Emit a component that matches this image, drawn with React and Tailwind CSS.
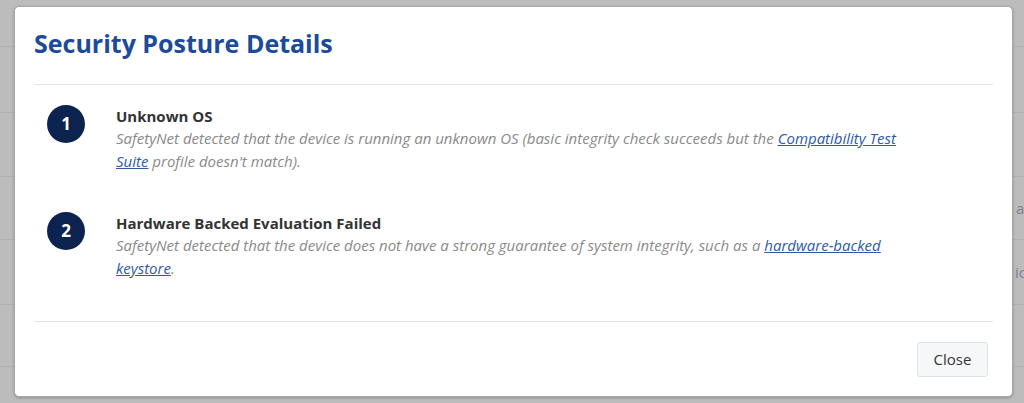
import React from 'react';

const FONT = { fontFamily: '"Open Sans", "Noto Sans", sans-serif' };

const FINDINGS = [
  {
    title: 'Unknown OS',
    before: 'SafetyNet detected that the device is running an unknown OS (basic integrity check succeeds but the ',
    link: 'Compatibility Test Suite',
    after: " profile doesn't match).",
  },
  {
    title: 'Hardware Backed Evaluation Failed',
    before: 'SafetyNet detected that the device does not have a strong guarantee of system integrity, such as a ',
    link: 'hardware-backed keystore',
    after: '.',
  },
];

// rows of the page behind the dialog, only their edges show
const ROWS = [
  { h: 'h-[47px]', right: '', mr: '' },
  { h: 'h-[66px]', right: '', mr: '' },
  { h: 'h-[64px]', right: '', mr: '' },
  { h: 'h-[63px]', right: 'al', mr: '-mr-[4px]' },
  { h: 'h-[65px]', right: 'ion', mr: '-mr-[13px]' },
  { h: 'h-[62px]', right: '', mr: '' },
];

function Backdrop() {
  return (
    <div className="absolute inset-0 bg-[#bcbcbc]">
      {ROWS.map((r, i) => (
        <div key={i} className={`${r.h} border-b border-[#b0b0b0] flex items-center justify-end`}>
          <span className={`text-[15px] text-[#7a8290] whitespace-nowrap ${r.mr}`}>{r.right}</span>
        </div>
      ))}
      <div className="pl-[272px] text-[15px] text-[#7a8290] leading-none pt-[3px]">Pixel 6a</div>
    </div>
  );
}

function Finding({ n, item }) {
  return (
    <div className="flex items-start">
      <div className="w-[82px] pl-[13px] shrink-0">
        <div className="w-[38px] h-[38px] rounded-full bg-[#0c2350] text-white flex items-center justify-center text-[17px] font-bold">
          {n}
        </div>
      </div>
      <div className="w-[810px]">
        <div className="text-[15px] font-bold text-[#333] leading-[22px]">{item.title}</div>
        <p className="text-[15px] italic text-[#8a8a8a] leading-[23px]">
          {item.before}
          <a href="#" className="text-[#2d5aa8] underline">{item.link}</a>
          {item.after}
        </p>
      </div>
    </div>
  );
}

export default function App() {
  return (
    <div className="relative w-[1024px] h-[403px] overflow-hidden" style={FONT}>
      <Backdrop />
      <div className="absolute left-[14px] top-[6px] w-[999px] h-[391px] bg-white rounded-[5px] border border-[#a8a8a8] shadow-[0_1px_3px_rgba(0,0,0,0.25)] px-[19px]">
        <div className="pt-[19px] pb-[24px] border-b border-[#e6e6e6]">
          <h2 className="text-[25px] font-bold text-[#1d4b9a] leading-[34px]">Security Posture Details</h2>
        </div>
        <div className="pt-[20px] flex flex-col gap-[39px] border-b border-[#e6e6e6] h-[237px]">
          {FINDINGS.map((f, i) => (
            <Finding key={i} n={i + 1} item={f} />
          ))}
        </div>
        <div className="flex justify-end pt-[20px] pr-[5px]">
          <button className="w-[71px] h-[35px] bg-[#f6f7f9] border border-[#dfe1e5] rounded-[3px] text-[15px] text-[#333]">
            Close
          </button>
        </div>
      </div>
    </div>
  );
}
